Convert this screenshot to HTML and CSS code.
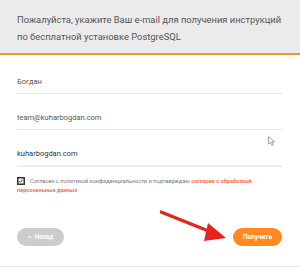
FILE: index.html
```html
<!DOCTYPE html>
<html lang="ru">
<head>
<meta charset="utf-8">
<link rel="stylesheet" href="styles.css">
</head>
<body>
<div class="page">
  <div class="header">
    <p class="intro">Пожалуйста, укажите Ваш e-mail для получения инструкций<br>по бесплатной установке PostgreSQL</p>
  </div>
  <div class="form">
    <div class="field">Богдан</div>
    <div class="field">team@kuharbogdan.com</div>
    <div class="field field-last">kuharbogdan.com</div>
    <div class="agree">
      <span class="box"><svg viewBox="0 0 8 8" width="8" height="8"><rect x="0.75" y="0.75" width="6.5" height="6.5" fill="#fff" stroke="#333" stroke-width="1.5"/><path d="M2.3 4.2 L3.4 5.3 L5.8 2.6" fill="none" stroke="#333" stroke-width="1"/></svg></span>Согласен с политикой конфиденциальности и подтверждаю <span class="link">согласие с обработкой персональных данных</span>
    </div>
    <div class="buttons">
      <button class="btn btn-back"><span class="larr">&larr;</span> Назад</button>
      <button class="btn btn-go">Получить</button>
    </div>
  </div>
  <svg class="arrow" width="80" height="40" viewBox="0 0 80 40">
    <path d="M1 2 L56 24" stroke="#e8231b" stroke-width="3.5" stroke-linecap="round"/>
    <path d="M48 13 L66 28 L44 31 Z" fill="#e8231b"/>
  </svg>
  <svg class="cursor" width="8" height="10" viewBox="0 0 8 10">
    <path d="M0.5 0.5 L0.5 8 L2.5 6.3 L4 9.3 L5.2 8.7 L3.8 5.8 L6.5 5.8 Z" fill="#fff" stroke="#888" stroke-width="0.8"/>
  </svg>
</div>
</body>
</html>
```

FILE: styles.css
```css
html, body {
  margin: 0;
  padding: 0;
  background: #fff;
}
.page {
  position: relative;
  width: 300px;
  height: 267px;
  box-sizing: border-box;
  border-bottom: 1px solid #e6e6e6;
  font-family: Roboto, "Liberation Sans", sans-serif;
  overflow: hidden;
}
.header {
  background: #ebebeb;
  border-bottom: 2px solid #f7931e;
  padding: 11px 0 0 17px;
  height: 42px;
}
.intro {
  margin: 0;
  font-size: 9.4px;
  line-height: 17px;
  color: #555;
  white-space: nowrap;
}
.form {
  padding: 3px 18px 0 17px;
}
.field {
  padding: 19px 0 6px;
  line-height: 10px;
  font-size: 7.5px;
  color: #555;
  border-bottom: 1px solid #efe4da;
}
.field-last {
  color: #333;
  border-bottom: 2px solid #eeeeee;
}
.agree {
  margin-top: 10px;
  font-size: 5.6px;
  line-height: 9px;
  color: #777;
}
.box {
  display: inline-block;
  width: 8px;
  height: 8px;
  vertical-align: -2px;
  margin: 0 5px 0 0;
}
.box svg {
  display: block;
}
.link {
  color: #ff6a3d;
  font-weight: 700;
}
.buttons {
  display: flex;
  justify-content: space-between;
  margin-top: 33px;
}
.btn {
  height: 18px;
  border: none;
  border-radius: 9px;
  color: #fff;
  font-family: Roboto, "Liberation Sans", sans-serif;
  font-size: 6.4px;
  font-weight: 700;
  padding: 0;
}
.larr {
  font-family: "DejaVu Sans", sans-serif;
  font-weight: 400;
}
.btn-back {
  width: 47px;
  background: #cccccc;
}
.btn-go {
  width: 49px;
  background: #ff8a1f;
}
.arrow {
  position: absolute;
  left: 160px;
  top: 210px;
}
.cursor {
  position: absolute;
  left: 268px;
  top: 136px;
}
```
